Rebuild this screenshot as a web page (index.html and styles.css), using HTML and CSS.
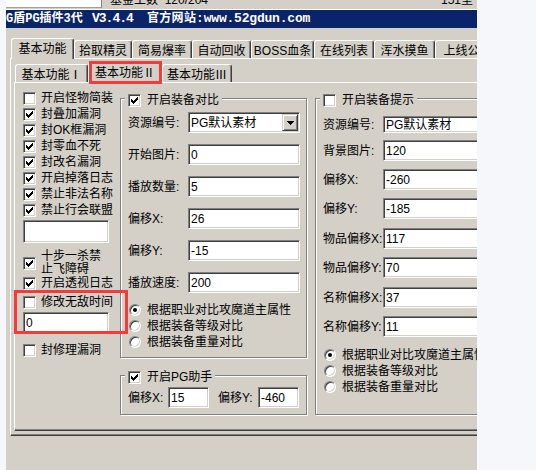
FILE: index.html
```html
<!DOCTYPE html>
<html lang="zh-CN">
<head>
<meta charset="utf-8">
<title>G盾PG插件3代</title>
<link rel="stylesheet" href="styles.css">
</head>
<body>
<div class="window">
  <div class="topstrip">
    <div class="tbox"></div>
    <div class="ttext">基金工数 &nbsp;120/204</div>
    <div class="ttext tright">151室</div>
  </div>
  <div class="titlebar">
    <span class="t1">G盾PG插件3代</span><span class="t2">V3.4.4</span><span class="t3">官方网站:</span><span class="t4">www.52gdun.com</span>
  </div>

  <div class="tabs otabs">
    <div class="tab sel w63">基本功能</div>
    <div class="tab w58">拾取精灵</div>
    <div class="tab w60">简易爆率</div>
    <div class="tab w59">自动回收</div>
    <div class="tab w63">BOSS血条</div>
    <div class="tab w60">在线列表</div>
    <div class="tab w61">浑水摸鱼</div>
    <div class="tab w65">上线公告</div>
  </div>

  <div class="panel opanel">
    <div class="tabs itabs">
      <div class="tab w73">基本功能Ⅰ</div>
      <div class="tab sel w74">基本功能Ⅱ</div>
      <div class="tab w70">基本功能Ⅲ</div>
    </div>

    <div class="panel ipanel">
      <div class="col left">
        <label class="chk"><span class="box"></span>开启怪物简装</label>
        <label class="chk"><span class="box"><svg class="ck" width="7" height="7" viewBox="0 0 7 7"><path d="M0 2h1v1h1v1h1v-1h1v-1h1v-1h1v-1h1v3h-1v1h-1v1h-1v1h-1v1h-1v-1h-1v-1h-1z"/></svg></span>封叠加漏洞</label>
        <label class="chk"><span class="box"><svg class="ck" width="7" height="7" viewBox="0 0 7 7"><path d="M0 2h1v1h1v1h1v-1h1v-1h1v-1h1v-1h1v3h-1v1h-1v1h-1v1h-1v1h-1v-1h-1v-1h-1z"/></svg></span>封OK框漏洞</label>
        <label class="chk"><span class="box"><svg class="ck" width="7" height="7" viewBox="0 0 7 7"><path d="M0 2h1v1h1v1h1v-1h1v-1h1v-1h1v-1h1v3h-1v1h-1v1h-1v1h-1v1h-1v-1h-1v-1h-1z"/></svg></span>封零血不死</label>
        <label class="chk"><span class="box"><svg class="ck" width="7" height="7" viewBox="0 0 7 7"><path d="M0 2h1v1h1v1h1v-1h1v-1h1v-1h1v-1h1v3h-1v1h-1v1h-1v1h-1v1h-1v-1h-1v-1h-1z"/></svg></span>封改名漏洞</label>
        <label class="chk"><span class="box"><svg class="ck" width="7" height="7" viewBox="0 0 7 7"><path d="M0 2h1v1h1v1h1v-1h1v-1h1v-1h1v-1h1v3h-1v1h-1v1h-1v1h-1v1h-1v-1h-1v-1h-1z"/></svg></span>开启掉落日志</label>
        <label class="chk"><span class="box"><svg class="ck" width="7" height="7" viewBox="0 0 7 7"><path d="M0 2h1v1h1v1h1v-1h1v-1h1v-1h1v-1h1v3h-1v1h-1v1h-1v1h-1v1h-1v-1h-1v-1h-1z"/></svg></span>禁止非法名称</label>
        <label class="chk"><span class="box"><svg class="ck" width="7" height="7" viewBox="0 0 7 7"><path d="M0 2h1v1h1v1h1v-1h1v-1h1v-1h1v-1h1v3h-1v1h-1v1h-1v1h-1v1h-1v-1h-1v-1h-1z"/></svg></span>禁止行会联盟</label>
        <div class="edit blank"></div>
        <label class="chk multi"><span class="box"><svg class="ck" width="7" height="7" viewBox="0 0 7 7"><path d="M0 2h1v1h1v1h1v-1h1v-1h1v-1h1v-1h1v3h-1v1h-1v1h-1v1h-1v1h-1v-1h-1v-1h-1z"/></svg></span><span class="wrap">十步一杀禁止飞障碍</span></label>
        <label class="chk short"><span class="box"><svg class="ck" width="7" height="7" viewBox="0 0 7 7"><path d="M0 2h1v1h1v1h1v-1h1v-1h1v-1h1v-1h1v3h-1v1h-1v1h-1v1h-1v1h-1v-1h-1v-1h-1z"/></svg></span>开启透视日志</label>
        <label class="chk gap4"><span class="box"></span>修改无敌时间</label>
        <div class="edit zero">0</div>
        <label class="chk gap9"><span class="box"></span>封修理漏洞</label>
      </div>

      <div class="col mid">
        <fieldset class="grp g1">
          <legend><span class="box"><svg class="ck" width="7" height="7" viewBox="0 0 7 7"><path d="M0 2h1v1h1v1h1v-1h1v-1h1v-1h1v-1h1v3h-1v1h-1v1h-1v1h-1v1h-1v-1h-1v-1h-1z"/></svg></span>开启装备对比</legend>
          <div class="row"><span class="lbl">资源编号:</span><div class="edit combo w112">PG默认素材<span class="drop"><svg width="7" height="4" viewBox="0 0 7 4"><path d="M0 0h7v1h-1v1h-1v1h-1v1h-1v-1h-1v-1h-1v-1h-1z"/></svg></span></div></div>
          <div class="row m11"><span class="lbl">开始图片:</span><div class="edit w112">0</div></div>
          <div class="row m11"><span class="lbl">播放数量:</span><div class="edit w112">5</div></div>
          <div class="row m11"><span class="lbl">偏移X:</span><div class="edit w112">26</div></div>
          <div class="row m11"><span class="lbl">偏移Y:</span><div class="edit w112">-15</div></div>
          <div class="row m11"><span class="lbl">播放速度:</span><div class="edit w112">200</div></div>
          <div class="radios r1">
            <div class="radio"><span class="rad on"></span>根据职业对比攻魔道主属性</div>
            <div class="radio"><span class="rad"></span>根据装备等级对比</div>
            <div class="radio"><span class="rad"></span>根据装备重量对比</div>
          </div>
        </fieldset>
        <fieldset class="grp g2">
          <legend><span class="box"><svg class="ck" width="7" height="7" viewBox="0 0 7 7"><path d="M0 2h1v1h1v1h1v-1h1v-1h1v-1h1v-1h1v3h-1v1h-1v1h-1v1h-1v1h-1v-1h-1v-1h-1z"/></svg></span>开启PG助手</legend>
          <div class="row">
            <span class="lbl w40">偏移X:</span><div class="edit w41">15</div>
            <span class="lbl w40 ml9">偏移Y:</span><div class="edit w41">-460</div>
          </div>
        </fieldset>
      </div>

      <div class="col right">
        <fieldset class="grp g3">
          <legend><span class="box"></span>开启装备提示</legend>
          <div class="row h17"><span class="lbl">资源编号:</span><div class="edit w112 h17">PG默认素材</div></div>
          <div class="row m7"><span class="lbl">背景图片:</span><div class="edit w112">120</div></div>
          <div class="row m8"><span class="lbl">偏移X:</span><div class="edit w112">-260</div></div>
          <div class="row m8"><span class="lbl">偏移Y:</span><div class="edit w112">-185</div></div>
          <div class="row m9"><span class="lbl">物品偏移X:</span><div class="edit w112">117</div></div>
          <div class="row m8"><span class="lbl">物品偏移Y:</span><div class="edit w112">70</div></div>
          <div class="row m9"><span class="lbl">名称偏移X:</span><div class="edit w112">37</div></div>
          <div class="row m8"><span class="lbl">名称偏移Y:</span><div class="edit w112">11</div></div>
          <div class="radios r3">
            <div class="radio"><span class="rad on"></span>根据职业对比攻魔道主属性</div>
            <div class="radio"><span class="rad"></span>根据装备等级对比</div>
            <div class="radio"><span class="rad"></span>根据装备重量对比</div>
          </div>
        </fieldset>
      </div>
    </div>
  </div>

  <div class="mark m-tab"></div>
  <div class="mark m-god"></div>
</div>
</body>
</html>
```

FILE: styles.css
```css
* { box-sizing: border-box; }

html, body { height: 100%; }

body {
  margin: 0;
  background: #f6f7fb;
  font: 12px/14px "Liberation Sans", "Noto Sans CJK SC", sans-serif;
  color: #000;
}

.window {
  position: relative;
  margin-left: 6px;
  width: 471px;
  height: 470px;
  overflow: hidden;
  background: #d4d0c8;
}

/* strip of the window behind, above the title bar */
.topstrip {
  height: 10px;
  display: flex;
  overflow: hidden;
  border-bottom: 1px solid #ffffff;
}
.tbox {
  width: 96px;
  height: 8px;
  flex: none;
  background: #ffffff;
  border-right: 1px solid #808080;
  border-bottom: 1px solid #a0a0a0;
}
.ttext {
  margin: -7px 0 0 8px;
  line-height: 14px;
  white-space: nowrap;
}
.ttext.tright { margin-left: auto; margin-right: 4px; }

/* title bar */
.titlebar {
  height: 18px;
  background: #0a246a;
  color: #ffffff;
  font-weight: bold;
  font-size: 12px;
  font-family: "Liberation Mono", "Noto Sans CJK SC", monospace;
  display: flex;
  align-items: center;
  white-space: nowrap;
}
.titlebar .t1 { width: 86px; flex: none; }
.titlebar .t2 {
  width: 55px;
  flex: none;
  font-size: 13px;
  letter-spacing: -1px;
}
.titlebar .t3 { flex: none; letter-spacing: 0.3px; }
.titlebar .t4 {
  font-size: 13px;
  letter-spacing: -0.2px;
}

/* tabs */
.tabs {
  display: flex;
  align-items: flex-end;
  height: 20px;
}
.otabs { margin-top: 10px; padding-left: 5px; }
.itabs { padding-left: 1px; }

.tab {
  flex: none;
  height: 18px;
  padding-top: 2px;
  border: 1px solid #ffffff;
  border-bottom: none;
  border-right-color: #404040;
  border-radius: 3px 3px 0 0;
  box-shadow: inset -1px 0 #808080;
  background: #d4d0c8;
  display: flex;
  align-items: center;
  justify-content: center;
  white-space: nowrap;
}
.tab.sel {
  height: 21px;
  padding-top: 1px;
  padding-bottom: 1px;
  margin-bottom: -1px;
  position: relative;
  z-index: 1;
}
.w58 { width: 58px; }
.w59 { width: 59px; }
.w60 { width: 60px; }
.w61 { width: 61px; }
.w63 { width: 63px; }
.w65 { width: 65px; }
.w70 { width: 70px; }
.w73 { width: 73px; }
.w74 { width: 74px; }

/* raised panels */
.panel {
  border: 1px solid;
  border-color: #ffffff #404040 #404040 #ffffff;
  box-shadow: inset -1px -1px #808080;
}
.opanel {
  margin-left: 4px;
  width: 600px;
  height: 378px;
  padding: 3px 0 0 3px;
}
.ipanel {
  width: 590px;
  height: 349px;
  padding: 7px 0 0 8px;
  display: flex;
  align-items: flex-start;
}

.col { display: flex; flex-direction: column; flex: none; }
.left { width: 97px; }
.mid { width: 187px; }
.right { width: 200px; margin-left: 8px; }

/* checkboxes */
.chk {
  display: flex;
  align-items: center;
  height: 16px;
  white-space: nowrap;
}
.box {
  width: 13px;
  height: 13px;
  flex: none;
  margin-right: 5px;
  background: #ffffff;
  border: 1px solid;
  border-color: #808080 #ffffff #ffffff #808080;
  box-shadow: inset 1px 1px #404040, inset -1px -1px #d4d0c8;
  display: flex;
  align-items: center;
  justify-content: center;
}
.ck { display: block; shape-rendering: crispEdges; fill: #000; }

.chk.multi { height: 26px; margin-top: 7px; }
.chk.multi .wrap { width: 62px; white-space: normal; line-height: 13px; }
.chk.short { height: 14px; }
.chk.gap4 { margin-top: 4px; }
.chk.gap9 { margin-top: 9px; }

/* edits */
.edit {
  height: 21px;
  flex: none;
  background: #ffffff;
  border: 1px solid;
  border-color: #808080 #ffffff #ffffff #808080;
  box-shadow: inset 1px 1px #404040, inset -1px -1px #d4d0c8;
  padding-left: 2px;
  display: flex;
  align-items: center;
  white-space: nowrap;
  overflow: hidden;
}
.edit.blank { width: 86px; height: 23px; margin-top: 2px; }
.edit.zero { width: 86px; margin-top: 2px; }
.w112 { width: 112px; }
.w41 { width: 41px; }
.h17 { height: 17px; }

.combo { padding-right: 1px; }
.drop {
  margin-left: auto;
  width: 16px;
  height: 17px;
  flex: none;
  border: 1px solid;
  border-color: #d4d0c8 #404040 #404040 #d4d0c8;
  box-shadow: inset 1px 1px #ffffff, inset -1px -1px #808080;
  background: #d4d0c8;
  display: flex;
  align-items: center;
  justify-content: center;
}
.drop svg { display: block; shape-rendering: crispEdges; fill: #000; }

/* group boxes */
.grp {
  margin: 0;
  min-width: 0;
  border: 1px solid #808080;
  box-shadow: inset 1px 1px #ffffff, 1px 1px #ffffff;
}
.grp legend {
  margin-left: -3px;
  padding: 4px 3px 0;
  height: 17px;
  line-height: 13px;
  display: flex;
  align-items: center;
  background: #d4d0c8;
  white-space: nowrap;
}
.grp legend .box { margin-right: 6px; }

.g1 { width: 187px; padding: 5px 0 7px 7px; }
.g2 { width: 187px; margin-top: 9px; padding: 3px 0 6px 7px; }
.g3 { width: 200px; padding: 9px 0 19px 7px; }

.row { display: flex; align-items: center; height: 21px; }
.row.h17 { height: 17px; }
.lbl { width: 60px; flex: none; white-space: nowrap; }
.lbl.w40 { width: 40px; }
.ml9 { margin-left: 9px; }
.m7 { margin-top: 7px; }
.m8 { margin-top: 8px; }
.m9 { margin-top: 9px; }
.m11 { margin-top: 11px; }

/* radios */
.radios { display: flex; flex-direction: column; }
.r1 { margin-top: 9px; }
.r3 { margin-top: 10px; }
.radio {
  display: flex;
  align-items: center;
  height: 16px;
  white-space: nowrap;
}
.rad {
  width: 12px;
  height: 12px;
  flex: none;
  margin: 0 6px 0 1px;
  border-radius: 50%;
  background: #ffffff;
  border: 1px solid;
  border-color: #808080 #ffffff #ffffff #808080;
  box-shadow: inset 1px 1px #404040, inset -1px -1px #d4d0c8;
  display: flex;
  align-items: center;
  justify-content: center;
}
.rad.on::after {
  content: "";
  width: 4px;
  height: 4px;
  border-radius: 50%;
  background: #000;
}

/* red annotation rectangles laid over the screenshot */
.mark {
  position: absolute;
  border: 3px solid #f23b3b;
  z-index: 5;
}
.m-tab { left: 83px; top: 61px; width: 73px; height: 23px; }
.m-god { left: 8px; top: 290px; width: 114px; height: 44px; }
```
